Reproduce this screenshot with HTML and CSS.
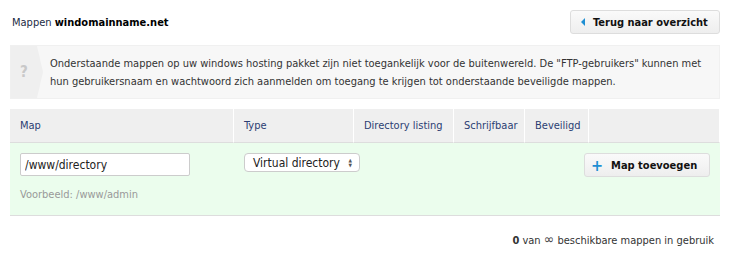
FILE: index.html
```html
<!DOCTYPE html>
<html lang="nl">
  <head>
    <meta charset="UTF-8" />
    <title>Mappen</title>
    <link rel="stylesheet" href="styles.css">
  </head>
  <body>
    <div id="page">
      <div id="top">
        <h1 class="title">Mappen <b>windomainname.net</b></h1>
        <button class="btn back"><span class="arrow-left"></span>Terug naar overzicht</button>
      </div>

      <div class="info">
        <div class="info-icon">?</div>
        <p>Onderstaande mappen op uw windows hosting pakket zijn niet toegankelijk voor de buitenwereld. De "FTP-gebruikers" kunnen met hun gebruikersnaam en wachtwoord zich aanmelden om toegang te krijgen tot onderstaande beveiligde mappen.</p>
      </div>

      <div class="grid">
        <div class="th">Map</div>
        <div class="th">Type</div>
        <div class="th">Directory listing</div>
        <div class="th">Schrijfbaar</div>
        <div class="th">Beveiligd</div>
        <div class="th"></div>

        <div class="td">
          <input type="text" class="path" value="/www/directory" />
          <div class="hint">Voorbeeld: /www/admin</div>
        </div>
        <div class="td">
          <div class="select">Virtual directory <span class="updown">&#9650;<br>&#9660;</span></div>
        </div>
        <div class="td add-cell">
          <button class="btn add"><span class="plus">+</span>Map toevoegen</button>
        </div>
      </div>

      <div class="usage"><b>0</b> van <span class="inf">&infin;</span> beschikbare mappen in gebruik</div>
    </div>
  </body>
</html>
```
FILE: styles.css
```css
* {
  margin: 0;
  padding: 0;
  box-sizing: border-box;
}
body {
  background-color: #fff;
  font-family: "DejaVu Sans Condensed", "DejaVu Sans", sans-serif;
  font-stretch: semi-condensed;
  font-size: 11px;
  color: #333;
}
#page {
  width: 710px;
  margin-left: 10px;
}
#top {
  display: flex;
  justify-content: space-between;
  align-items: center;
  height: 45px;
}
.title {
  font-size: 11px;
  font-weight: normal;
  color: #1c2b45;
  padding-left: 2px;
}
.title b {
  color: #000;
}
.btn {
  font-family: inherit;
  font-stretch: inherit;
  font-size: 11px;
  font-weight: bold;
  color: #111;
  background: linear-gradient(#fafafa, #eee);
  border: 1px solid #ddd;
  border-radius: 3px;
  height: 24px;
  display: flex;
  align-items: center;
  white-space: nowrap;
  cursor: pointer;
}
.back {
  width: 150px;
  padding-left: 10px;
  margin-top: -1px;
}
.arrow-left {
  width: 0;
  height: 0;
  border-top: 4px solid transparent;
  border-bottom: 4px solid transparent;
  border-right: 4px solid #1f8fd3;
  margin-right: 8px;
}
.info {
  display: flex;
  background-color: #f7f7f7;
  border: 1px solid #f0f0f0;
  height: 54px;
  margin-bottom: 10px;
}
.info-icon {
  position: relative;
  width: 26px;
  background-color: #efefef;
  color: #c8c8c8;
  font-size: 15px;
  font-weight: bold;
  display: flex;
  align-items: center;
  justify-content: center;
  flex-shrink: 0;
}
.info-icon::after {
  content: "";
  position: absolute;
  right: -6px;
  top: 50%;
  margin-top: -26px;
  border-top: 26px solid transparent;
  border-bottom: 26px solid transparent;
  border-left: 6px solid #efefef;
}
.info p {
  padding: 9px 8px 0 13px;
  line-height: 18px;
}
.grid {
  display: grid;
  grid-template-columns: 224px 120px 100px 71px 64px 1fr;
}
.th {
  background-color: #efefef;
  height: 34px;
  line-height: 34px;
  padding-left: 10px;
  color: #2c3e73;
  border-right: 1px solid #fff;
  border-bottom: 1px solid #ddd;
  white-space: nowrap;
}
.th:last-child {
  border-right: none;
}
.td {
  background-color: #ebfded;
  height: 73px;
  border-bottom: 1px solid #ddd;
  padding: 10px 0 0 10px;
}
.path {
  width: 170px;
  height: 23px;
  border: 1px solid #ccc;
  border-radius: 2px;
  font-family: inherit;
  font-stretch: inherit;
  font-size: 12px;
  padding-left: 4px;
  color: #222;
}
.hint {
  color: #999;
  margin-top: 12px;
}
.select {
  position: relative;
  z-index: 1;
  width: 116px;
  height: 19px;
  border: 1px solid #ccc;
  border-radius: 4px;
  background-color: #fff;
  font-size: 12px;
  color: #222;
  padding-left: 8px;
  display: flex;
  align-items: center;
  justify-content: space-between;
  white-space: nowrap;
}
.updown {
  font-size: 5px;
  line-height: 5px;
  color: #555;
  padding-right: 7px;
}
.add-cell {
  grid-column: 3 / 7;
  display: flex;
  justify-content: flex-end;
  padding-right: 10px;
}
.add {
  width: 126px;
  padding-left: 6px;
}
.plus {
  color: #1f8fd3;
  font-size: 16px;
  font-weight: 900;
  margin-right: 8px;
}
.usage {
  text-align: right;
  padding: 15px 6px 0 0;
}
.inf {
  font-size: 14px;
  color: #444;
}
```
